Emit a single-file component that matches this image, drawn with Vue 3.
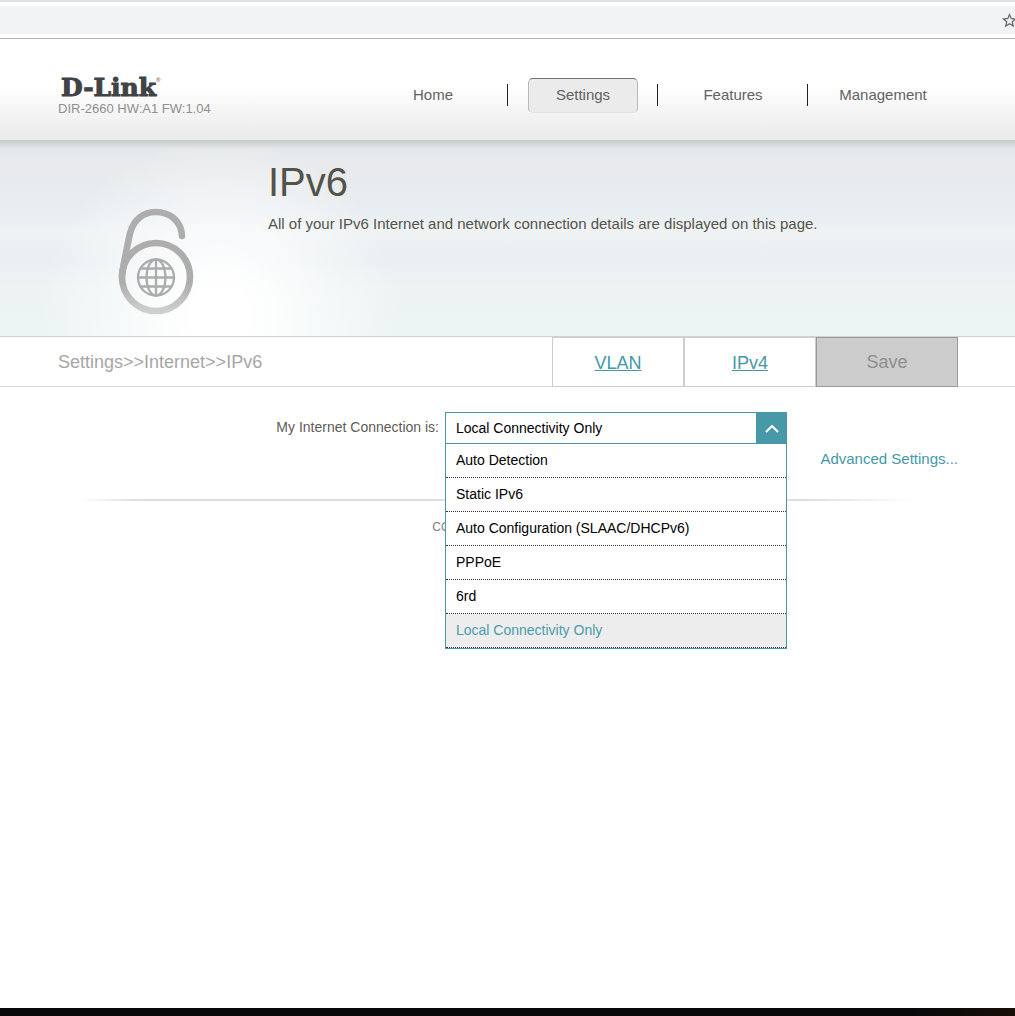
<script setup>
import { ref } from 'vue'

const navItems = ['Home', 'Settings', 'Features', 'Management']
const activeNav = ref('Settings')

const connectionTypes = [
  'Auto Detection',
  'Static IPv6',
  'Auto Configuration (SLAAC/DHCPv6)',
  'PPPoE',
  '6rd',
  'Local Connectivity Only',
]
const connection = ref('Local Connectivity Only')
const listOpen = ref(true)

function choose(type) {
  connection.value = type
  listOpen.value = false
}
</script>

<template>
  <div class="page">
    <div class="browser-bar">
      <div class="address">
        <button class="star" type="button" aria-label="Bookmark this page">
          <svg viewBox="2 2 20 20" width="15" height="15">
            <path
              fill="#5f6368"
              d="M22 9.24l-7.19-.62L12 2 9.19 8.63 2 9.24l5.46 4.73L5.82 21 12 17.27 18.18 21l-1.63-7.03L22 9.24zM12 15.4l-3.76 2.27 1-4.28-3.32-2.88 4.38-.38L12 6.1l1.71 4.04 4.38.38-3.32 2.88 1 4.28L12 15.4z"
            />
          </svg>
        </button>
      </div>
    </div>

    <header class="header">
      <div class="wrap header-row">
        <div class="brand">
          <div class="logo">D-Link<sup>®</sup></div>
          <div class="firmware">DIR-2660 HW:A1 FW:1.04</div>
        </div>
        <nav>
          <ul class="nav">
            <li v-for="item in navItems" :key="item">
              <a href="#" :class="{ active: item === activeNav }" @click.prevent="activeNav = item">{{ item }}</a>
            </li>
          </ul>
        </nav>
      </div>
    </header>

    <section class="hero">
      <div class="wrap hero-row">
        <div class="hero-icon">
          <svg viewBox="0 0 76 108" width="76" height="108" fill="none" aria-hidden="true">
            <defs>
              <linearGradient id="lock" gradientUnits="userSpaceOnUse" x1="0" y1="0" x2="0" y2="108">
                <stop offset="0" stop-color="#adadad" />
                <stop offset="0.7" stop-color="#adadad" />
                <stop offset="1" stop-color="#d4d4d4" />
              </linearGradient>
            </defs>
            <g stroke="url(#lock)" stroke-linecap="round">
              <circle cx="38" cy="69" r="34" stroke-width="6.6" />
              <path
                d="M4 68 C5 57 8.500 42 12 25.500 C15.500 11 26 4 37.500 4 C53 4 63.500 14 64 28"
                stroke-width="6.600"
              />
            </g>
            <g stroke="#acacac" stroke-width="2.3">
              <circle cx="38" cy="69.500" r="18" />
              <ellipse cx="38" cy="69.500" rx="9.500" ry="18" />
              <path d="M38 51.500v36M20 69.500h36M23 60.500h30M23 78.500h30" />
            </g>
          </svg>
        </div>
        <div class="hero-text">
          <h1>IPv6</h1>
          <p>All of your IPv6 Internet and network connection details are displayed on this page.</p>
        </div>
      </div>
    </section>

    <div class="toolbar">
      <div class="wrap toolbar-row">
        <div class="crumbs">Settings&gt;&gt;Internet&gt;&gt;IPv6</div>
        <div class="actions">
          <a class="tab" href="#">VLAN</a>
          <a class="tab" href="#">IPv4</a>
          <button class="save" type="button" disabled>Save</button>
        </div>
      </div>
    </div>

    <main class="wrap main">
      <div class="field">
        <label for="connection">My Internet Connection is:</label>
        <div class="picker">
          <select id="connection" v-model="connection" @mousedown.prevent="listOpen = !listOpen">
            <option v-for="type in connectionTypes" :key="type">{{ type }}</option>
          </select>
          <span class="caret" aria-hidden="true">
            <svg viewBox="0 0 14 8" width="14" height="8">
              <path d="M1 7l6-6 6 6" fill="none" stroke="#fff" stroke-width="2" />
            </svg>
          </span>
          <ul v-if="listOpen" class="options" role="listbox" aria-label="My Internet Connection is:">
            <li
              v-for="type in connectionTypes"
              :key="type"
              role="option"
              :aria-selected="type === connection"
              :class="{ selected: type === connection }"
              @click="choose(type)"
            >
              {{ type }}
            </li>
          </ul>
        </div>
      </div>
      <div class="advanced"><a href="#">Advanced Settings...</a></div>
      <div class="rule"></div>
      <p class="copyright">COPYRIGHT © 2018 D-Link</p>
    </main>

    <div class="bottom-edge"></div>
  </div>
</template>

<style>
body {
  margin: 0;
  background: #fff;
}
</style>

<style scoped>
.page {
  display: flex;
  flex-direction: column;
  min-height: 100vh;
  overflow-x: hidden;
  font-family: 'Liberation Sans', Arial, sans-serif;
  font-size: 14px;
  color: #54534a;
}
.page * {
  box-sizing: border-box;
}
.page .wrap {
  box-sizing: content-box;
  width: 100%;
  max-width: 900px;
  margin: 0 auto;
  padding-left: 1px;
}
ul,
h1,
p {
  margin: 0;
  padding: 0;
  list-style: none;
}

.browser-bar {
  padding: 4px 0;
  border-top: 2px solid #dee1e6;
  border-bottom: 1px solid #b3b3b3;
}
.address {
  display: flex;
  justify-content: flex-end;
  align-items: center;
  height: 28px;
  background: #f1f3f4;
}
.star {
  display: flex;
  width: 13px;
  padding: 0;
  border: 0;
  background: none;
  overflow: hidden;
}
.star svg {
  flex: none;
}

.header {
  background: linear-gradient(#fff 0%, #fff 45%, #ececec 95%, #ececec 100%);
}
.header-row {
  display: flex;
  justify-content: space-between;
  height: 101px;
}
.brand {
  padding-top: 37px;
}
.logo {
  display: flex;
  padding-left: 3px;
  font-family: 'DejaVu Serif', serif;
  font-size: 25px;
  font-weight: bold;
  line-height: 24px;
  height: 24px;
  color: #404245;
  -webkit-text-stroke: 1px #404245;
}
.logo sup {
  font-family: 'Liberation Sans', Arial, sans-serif;
  font-size: 6px;
  font-weight: normal;
  line-height: 8px;
  -webkit-text-stroke: 0;
}
.firmware {
  font-size: 13px;
  line-height: 18px;
  color: #8f8f8f;
}
.nav {
  display: flex;
  padding-top: 39px;
}
.nav li {
  display: flex;
  align-items: center;
  width: 150px;
  padding-left: 20px;
}
.nav li:not(:last-child)::after {
  content: '';
  width: 1px;
  height: 22px;
  margin: 0 0 2px auto;
  background: #222;
}
.nav a {
  width: 110px;
  height: 35px;
  border: 1px solid transparent;
  border-radius: 5px;
  font-size: 15px;
  line-height: 31px;
  text-align: center;
  text-decoration: none;
  color: #626262;
}
.nav a.active {
  border-color: #707070 #b8b8b8 #e2e2e2;
  background: #ebebeb;
}

.hero {
  background:
    linear-gradient(#c4caca, rgba(220, 226, 228, 0) 9px),
    radial-gradient(ellipse 180px 175px at 220px 175px, #fff 15%, rgba(255, 255, 255, 0)),
    linear-gradient(#e4e8ec 0, #e8eaeb 25px, #e9eef2 75px, #eef2f3 90px, #eaeff2 120px, #edf3f3 150px, #edf4f4);
}
.hero-row {
  display: flex;
  height: 196px;
}
.hero-icon {
  width: 210px;
  padding: 68px 0 0 60px;
}
.hero-text {
  flex: 1;
  padding-top: 19px;
}
h1 {
  font-size: 40px;
  font-weight: normal;
  line-height: 46px;
}
.hero p {
  padding-top: 10px;
  font-size: 15px;
  line-height: 18px;
}

.toolbar {
  border-top: 1px solid #ccd4d4;
  box-shadow: inset 0 -1px #dadada;
}
.toolbar-row {
  display: flex;
  justify-content: space-between;
  height: 50px;
}
.crumbs {
  font-size: 18px;
  line-height: 50px;
  color: #a6a6a6;
}
.actions {
  display: flex;
  font-size: 18px;
}
.tab {
  width: 132px;
  border: 1px solid #ccc;
  line-height: 50px;
  text-align: center;
  color: #4598a8;
}
.save {
  width: 142px;
  padding-top: 2px;
  border: 1px solid #999;
  background: #ccc;
  font: inherit;
  color: #8e8e8e;
}

.main {
  flex: 1 0 auto;
}
.field {
  display: flex;
  gap: 6px;
  padding-top: 25px;
}
.field label {
  width: 381px;
  line-height: 30px;
  text-align: right;
  color: #5c5c58;
}
.picker {
  position: relative;
  width: 342px;
}
.picker select {
  display: block;
  width: 100%;
  height: 32px;
  padding: 0 40px 0 10px;
  border: 1px solid #4799a8;
  border-radius: 0;
  appearance: none;
  background: #fff;
  font: inherit;
  color: #000;
}
.caret {
  position: absolute;
  top: 0;
  right: 0;
  display: flex;
  align-items: center;
  justify-content: center;
  width: 31px;
  height: 32px;
  padding-top: 2px;
  background: #4799a8;
  pointer-events: none;
}
.options {
  position: absolute;
  top: 100%;
  left: 0;
  z-index: 1;
  width: 100%;
  border: 1px solid #4799a8;
  border-top: 0;
  background: #fff;
  color: #000;
}
.options li {
  height: 34px;
  padding-left: 10px;
  border-bottom: 1px dotted #333;
  line-height: 33px;
  cursor: pointer;
}
.options .selected {
  background: #ededed;
  color: #4b9baa;
}
.advanced {
  padding-top: 6px;
  text-align: right;
  font-size: 15px;
  line-height: 18px;
}
.advanced a {
  color: #4598a8;
  text-decoration: none;
}
.rule {
  height: 2px;
  margin: 31px 46px 0 20px;
  background: linear-gradient(90deg, transparent, #dedede 60px, #dedede calc(100% - 100px), transparent);
}
.copyright {
  padding-top: 17px;
  font-size: 12px;
  line-height: 18px;
  text-align: center;
  color: #808080;
}
.bottom-edge {
  height: 8px;
  background: linear-gradient(90deg, #08080b 90%, #170d07);
}
</style>
